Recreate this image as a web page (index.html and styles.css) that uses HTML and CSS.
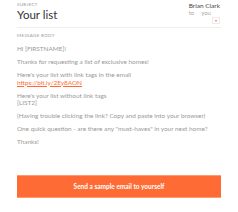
FILE: index.html
```html
<!DOCTYPE html>
<html>
<head>
<meta charset="utf-8">
<link rel="stylesheet" href="styles.css">
</head>
<body>
<div class="page">
  <div class="header">
    <div class="subject">
      <div class="label">Subject</div>
      <div class="title">Your list</div>
    </div>
    <div class="sender">
      <div class="name">Brian Clark</div>
      <div class="to"><span>to</span><span>you</span></div>
      <div class="toggle"><span class="caret"></span></div>
    </div>
  </div>
  <div class="body">
    <div class="label">Message body</div>
    <p>Hi [FIRSTNAME]!</p>
    <p>Thanks for requesting a list of exclusive homes!</p>
    <p>Here's your list with link tags in the email<br><a href="#">https://bit.ly/2Ey8AON</a></p>
    <p>Here's your list without link tags<br>[LIST2]</p>
    <p>(Having trouble clicking the link? Copy and paste into your browser)</p>
    <p>One quick question - are there any "must-haves" in your next home?</p>
    <p>Thanks!</p>
  </div>
  <button class="send">Send a sample email to yourself</button>
</div>
</body>
</html>
```
FILE: styles.css
```css
html, body {
  margin: 0;
  padding: 0;
  background: #fff;
}
body {
  font-family: Lato, "Open Sans", "Liberation Sans", sans-serif;
  width: 238px;
  height: 212px;
  overflow: hidden;
}
.page {
  padding: 2px 17px 0;
}
.header {
  display: flex;
  justify-content: space-between;
  border-bottom: 1px solid #eee;
  height: 25px;
}
.label {
  font-size: 4.5px;
  letter-spacing: 0.3px;
  text-transform: uppercase;
  color: #999;
  line-height: 5px;
}
.title {
  font-size: 11.5px;
  line-height: 13px;
  color: #333;
  margin-top: 1px;
}
.sender {
  display: flex;
  flex-direction: column;
  white-space: nowrap;
  padding-right: 1px;
}
.name {
  font-size: 6.5px;
  line-height: 7px;
  color: #444;
}
.to {
  font-size: 6px;
  line-height: 7px;
  color: #aaa;
  display: flex;
  gap: 7px;
}
.toggle {
  align-self: flex-end;
  margin-top: 1px;
  width: 6px;
  height: 5px;
  border: 1px solid #eee;
  display: flex;
  align-items: center;
  justify-content: center;
}
.caret {
  width: 0;
  height: 0;
  border-left: 1.5px solid transparent;
  border-right: 1.5px solid transparent;
  border-top: 2px solid #ff6b35;
}
.body {
  padding-top: 5px;
}
.body p {
  margin: 5.4px 0 0;
  font-size: 6.4px;
  line-height: 7.6px;
  color: #999;
}
.body .label + p {
  margin-top: 7px;
}
.body a {
  color: #ff6b35;
}
.send {
  display: block;
  width: 100%;
  margin-top: 29px;
  height: 23px;
  background: #ff6b35;
  border: none;
  border-top: 1px solid #ff9a6c;
  border-bottom: 1px solid #ff9a6c;
  color: #fff;
  font-family: inherit;
  font-weight: bold;
  font-size: 6.5px;
  padding: 0;
}
```
